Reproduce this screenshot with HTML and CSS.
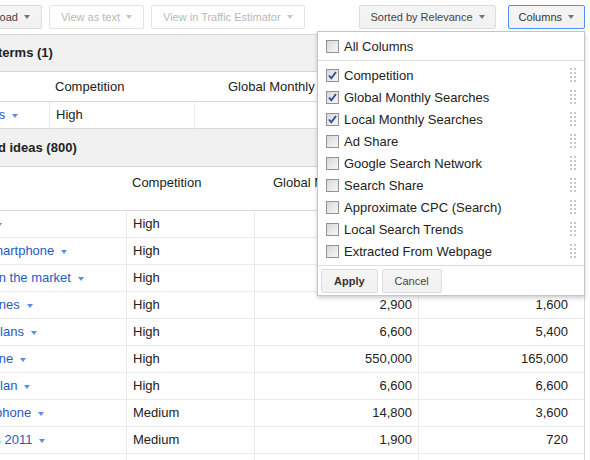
FILE: index.html
```html
<!DOCTYPE html>
<html lang="en">
<head>
    <meta charset="UTF-8">
    <title>Keyword Tool</title>
    <link rel="stylesheet" href="styles.css">
</head>
<body>
    <div class="page">
        <div class="toolbar">
            <button class="btn">Download<span class="caret"></span></button>
            <button class="btn disabled">View as text<span class="caret"></span></button>
            <button class="btn disabled">View in Traffic Estimator<span class="caret"></span></button>
            <button class="btn btn-right push">Sorted by Relevance<span class="caret"></span></button>
            <button class="btn btn-right active">Columns<span class="caret"></span></button>
        </div>
        <div class="results">
            <div class="section-title">Search terms (1)</div>
            <table class="grid grid-terms">
                <colgroup>
                    <col style="width: 125px">
                    <col style="width: 145px">
                    <col style="width: 195px">
                    <col>
                </colgroup>
                <thead>
                    <tr>
                        <th></th>
                        <th>Competition</th>
                        <th class="th-global">Global Monthly Searches</th>
                        <th class="th-local">Local Monthly Searches</th>
                    </tr>
                </thead>
                <tbody>
                    <tr>
                        <td><a class="kw">smartphones</a><span class="kw-caret"></span></td>
                        <td>High</td>
                        <td class="num">1,500,000</td>
                        <td class="num">673,000</td>
                    </tr>
                </tbody>
            </table>
            <div class="section-title">Keyword ideas (800)</div>
            <table class="grid grid-ideas">
                <colgroup>
                    <col style="width: 202px">
                    <col style="width: 128px">
                    <col style="width: 164px">
                    <col>
                </colgroup>
                <thead>
                    <tr>
                        <th></th>
                        <th>Competition</th>
                        <th class="th-global">Global Monthly Searches</th>
                        <th class="th-local">Local Monthly Searches</th>
                    </tr>
                </thead>
                <tbody id="ideaRows"></tbody>
            </table>
        </div>
    </div>

    <div class="column-menu">
        <ul class="menu-list">
            <li><span class="cb"></span>All Columns</li>
        </ul>
        <div class="menu-sep"></div>
        <ul class="menu-list" id="columnList"></ul>
        <div class="menu-sep"></div>
        <div class="menu-footer">
            <button class="btn btn-small strong">Apply</button>
            <button class="btn btn-small">Cancel</button>
        </div>
    </div>

    <script>
        const ideas = [
            ['cell phone', 'High', '24,900,000', '11,100,000'],
            ['unlocked smartphone', 'High', '12,100', '4,400'],
            ['top phone on the market', 'High', '2,400', '1,300'],
            ['android phones', 'High', '2,900', '1,600'],
            ['cell phone plans', 'High', '6,600', '5,400'],
            ['android phone', 'High', '550,000', '165,000'],
            ['cell phone plan', 'High', '6,600', '6,600'],
            ['good smartphone', 'Medium', '14,800', '3,600'],
            ['best phones 2011', 'Medium', '1,900', '720'],
            ['best cheap phone', 'High', '1,000', '590']
        ];

        const columns = [
            ['Competition', true],
            ['Global Monthly Searches', true],
            ['Local Monthly Searches', true],
            ['Ad Share', false],
            ['Google Search Network', false],
            ['Search Share', false],
            ['Approximate CPC (Search)', false],
            ['Local Search Trends', false],
            ['Extracted From Webpage', false]
        ];

        const rows = document.getElementById('ideaRows');
        ideas.forEach(r => {
            const tr = document.createElement('tr');
            tr.innerHTML =
                `<td><a class="kw">${r[0]}</a><span class="kw-caret"></span></td>` +
                `<td>${r[1]}</td>` +
                `<td class="num">${r[2]}</td>` +
                `<td class="num">${r[3]}</td>`;
            rows.appendChild(tr);
        });

        const list = document.getElementById('columnList');
        columns.forEach(c => {
            const li = document.createElement('li');
            const check = c[1]
                ? '<svg width="11" height="11" viewBox="0 0 11 11"><path d="M2 5.5l2.3 2.8L9 2" fill="none" stroke="#2f479c" stroke-width="1.8"/></svg>'
                : '';
            li.innerHTML = `<span class="cb">${check}</span>${c[0]}<span class="grip"></span>`;
            list.appendChild(li);
        });
    </script>
</body>
</html>
```

FILE: styles.css
```css
:root {
    --text: #222;
    --line: #ebebeb;
    --line-dark: #d6d6d6;
    --section-bg: #f1f1f1;
    --link: #1e5bc6;
}

body {
    margin: 0;
    width: 590px;
    height: 460px;
    overflow: hidden;
    position: relative;
    font-family: "Liberation Sans", Arial, sans-serif;
    font-size: 13px;
    color: var(--text);
    background: #fff;
}

.page {
    width: 661px;
    margin-left: -76px;
}

/* toolbar */

.toolbar {
    display: flex;
    gap: 7px;
    height: 34px;
    box-sizing: border-box;
    padding: 5px 0 0 33px;
}

.btn {
    height: 24px;
    padding: 0 11px;
    font-family: inherit;
    font-size: 11px;
    color: #444;
    background: linear-gradient(#f5f5f5, #f1f1f1);
    border: 1px solid #dcdcdc;
    border-radius: 2px;
    display: flex;
    align-items: center;
}

.btn-right {
    padding: 0 10px;
}

.btn.disabled {
    background: #fff;
    border-color: #e3e3e3;
    color: #b8b8b8;
}

.btn.push {
    margin-left: auto;
    margin-right: 5px;
}

.btn.active {
    border-color: #4d90fe;
    color: #333;
}

.caret {
    display: inline-block;
    margin-left: 6px;
    border-top: 4px solid #777;
    border-left: 3px solid transparent;
    border-right: 3px solid transparent;
}

.btn.disabled .caret {
    border-top-color: #c4c4c4;
}

/* results */

.results {
    border-top: 1px solid var(--line-dark);
    border-right: 1px solid var(--line-dark);
}

.section-title {
    background: var(--section-bg);
    font-weight: bold;
    line-height: 36px;
    padding-left: 27px;
    border-bottom: 1px solid var(--line-dark);
}

.section-title + .grid + .section-title {
    line-height: 37px;
}

.grid {
    width: 660px;
    table-layout: fixed;
    border-collapse: separate;
    border-spacing: 0;
}

.grid th {
    font-weight: normal;
    text-align: left;
    padding: 0 6px;
    white-space: nowrap;
    border-bottom: 1px solid var(--line-dark);
    overflow: hidden;
}

.grid-terms th {
    line-height: 29px;
}

.grid-terms .th-global {
    padding-left: 34px;
}

.grid-ideas th {
    vertical-align: top;
    line-height: 16px;
    height: 44px;
    box-sizing: border-box;
    padding-top: 8px;
}

.grid-ideas .th-global {
    padding-left: 19px;
}

.grid td {
    line-height: 26px;
    padding: 0 6px;
    white-space: nowrap;
    border-bottom: 1px solid var(--line);
}

.grid td + td {
    border-left: 1px solid var(--line);
}

.grid-terms td {
    border-bottom-color: #dadada;
}

.grid td.num {
    text-align: right;
}

.grid td:last-child {
    padding-right: 16px;
}

.kw {
    color: var(--link);
}

.kw-caret {
    display: inline-block;
    vertical-align: middle;
    margin-left: 7px;
    border-top: 4px solid #5b8fe0;
    border-left: 3px solid transparent;
    border-right: 3px solid transparent;
}

/* column picker */

.column-menu {
    position: absolute;
    left: 317px;
    top: 31px;
    width: 268px;
    box-sizing: border-box;
    padding: 3px 0 2px;
    background: #fff;
    border: 1px solid #c6c6c6;
    box-shadow: 0 2px 4px rgba(0, 0, 0, 0.2);
}

.menu-list {
    list-style: none;
    margin: 0;
    padding: 0;
}

.menu-list li {
    display: flex;
    align-items: center;
    height: 22px;
    padding: 0 8px;
    color: #222;
}

.cb {
    width: 13px;
    height: 13px;
    box-sizing: border-box;
    margin-right: 5px;
    border: 1px solid #929292;
    background: linear-gradient(135deg, #d8d8d8, #f7f7f7);
    display: flex;
    align-items: center;
    justify-content: center;
}

.grip {
    margin-left: auto;
    width: 6px;
    height: 14px;
    background: conic-gradient(from 0deg at 2px 2px, transparent 75%, #c8c8c8 0) 0 0 / 4px 4px;
}

.menu-sep {
    margin: 3px 0;
    border-top: 1px solid #dcdcdc;
}

.menu-footer {
    display: flex;
    gap: 4px;
    padding: 0 3px;
}

.btn-small {
    padding: 0 12px;
    color: #444;
}

.btn-small.strong {
    font-weight: bold;
    color: #333;
}
```
